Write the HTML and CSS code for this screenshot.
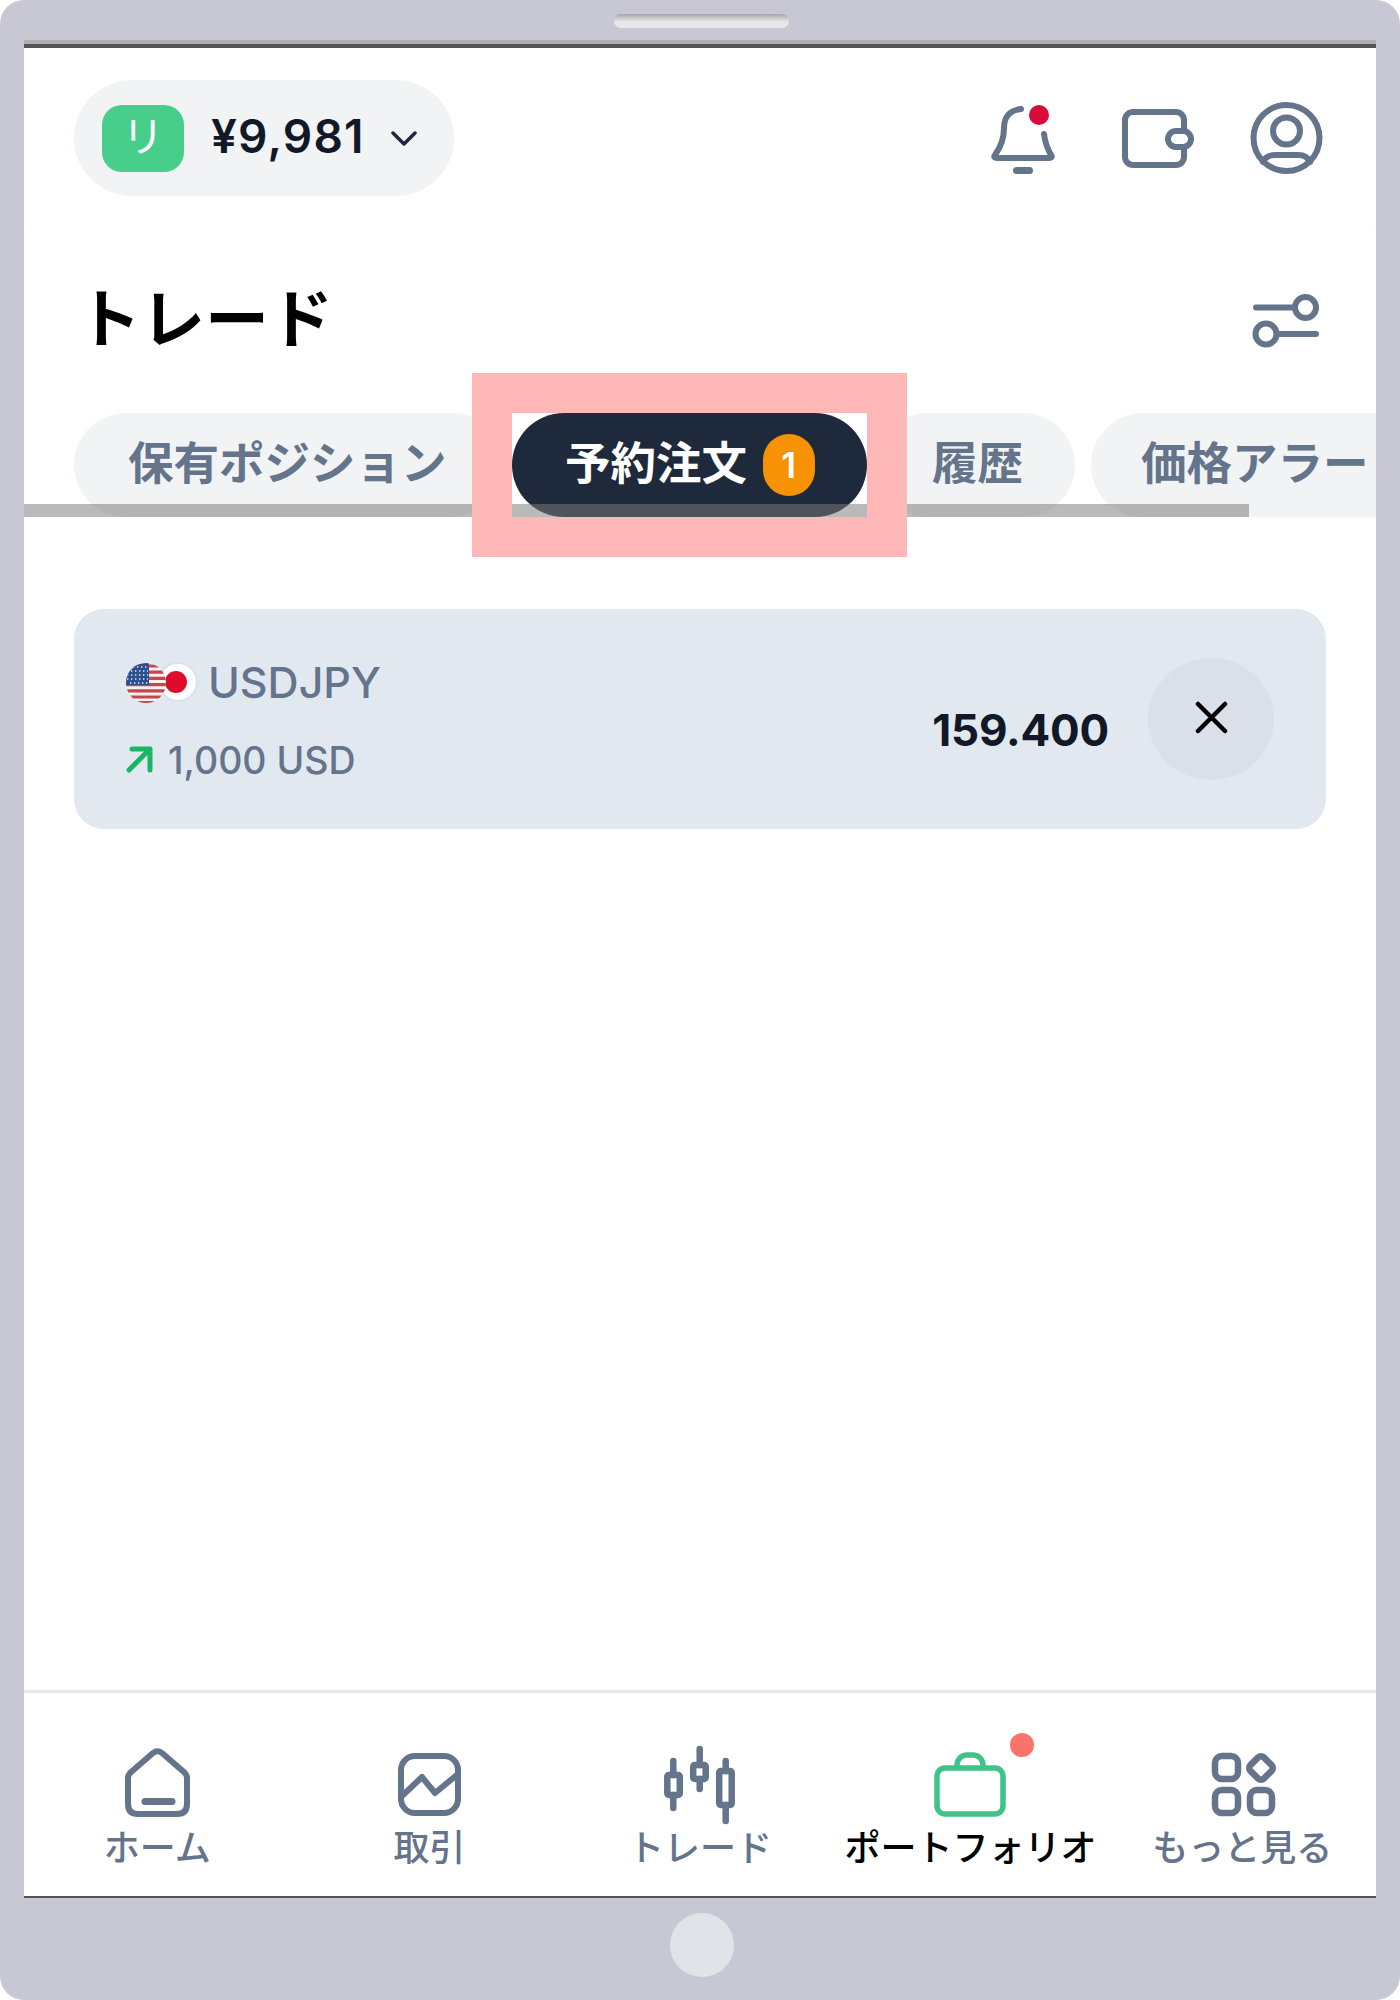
FILE: index.html
```html
<!DOCTYPE html>
<html lang="ja">
<head>
<meta charset="utf-8">
<title>トレード</title>
<link rel="stylesheet" href="styles.css">
</head>
<body>
<div class="device">
  <div class="bezel-top"><div class="speaker"></div></div>
  <main class="screen">
    <header class="topbar">
      <button class="account">
        <span class="account-badge">リ</span>
        <span class="balance">¥9,981</span>
        <svg class="chevron" viewBox="0 0 26 15"><path d="M2 2 L13 13 L24 2"/></svg>
      </button>
      <div class="top-icons">
        <span class="bell">
          <svg class="icon-bell" viewBox="0 0 64 69"><path d="M30 4 C19 5 13 12 13 23 C13 34 9 43 4 50 C2.5 52 3.5 53 6 53 H58 C60.5 53 61.500 52 60 50 C56 43 54 37 53 29"/><path class="thick" d="M25.500 65.500 H38.500"/></svg>
          <i class="bell-dot"></i>
        </span>
        <svg class="icon-wallet" viewBox="0 0 72 59"><path d="M62 19 V11 a8 8 0 0 0 -8 -8 H11 a8 8 0 0 0 -8 8 V48 a8 8 0 0 0 8 8 H54 a8 8 0 0 0 8 -8 V41"/><rect x="46" y="22" width="23" height="16" rx="8"/></svg>
        <svg class="icon-user" viewBox="0 0 73 72"><circle cx="36.500" cy="36" r="33"/><circle cx="36.500" cy="29" r="13.500"/><path d="M13 60 C15 55 20 53 25 53 H48 C53 53 58 55 60 60"/></svg>
      </div>
    </header>

    <div class="title-row">
      <h1 class="title">トレード</h1>
      <svg class="icon-filter" viewBox="0 0 66 53"><circle cx="52.500" cy="13.500" r="10.500"/><circle cx="13" cy="40" r="10.500"/><path d="M3 13.500 H40 M26 40 H63"/></svg>
    </div>

    <div class="tabs-wrap">
      <nav class="tabs">
        <span class="tab tab-first">保有ポジション</span>
        <span class="tab tab-active">予約注文<b class="count">1</b></span>
        <span class="tab tab-third">履歴</span>
        <span class="tab tab-last">価格アラート</span>
      </nav>
      <div class="scrollbar"></div>
      <div class="highlight"></div>
    </div>

    <section class="order">
      <div class="order-info">
        <div class="pair">
          <span class="flags">
            <svg class="flag-us" viewBox="0 0 40 40">
              <defs><clipPath id="round"><circle cx="20" cy="20" r="20"/></clipPath></defs>
              <g clip-path="url(#round)">
                <rect width="40" height="40" fill="#f5f1f1"/>
                <path class="stripes" d="M0 3 H40 M0 9.200 H40 M0 15.400 H40 M0 21.600 H40 M0 27.800 H40 M0 34 H40 M0 39.500 H40"/>
                <rect width="23" height="22" fill="#2c4f8f"/>
                <path class="stars" d="M3 4 H22 M1 8 H22 M1 12 H22 M1 16 H22 M4 20 H22"/>
              </g>
            </svg>
            <span class="flag-jp"><i></i></span>
          </span>
          <span class="symbol">USDJPY</span>
        </div>
        <div class="volume">
          <svg class="arrow" viewBox="0 0 27 27"><path d="M3 24 L24 3 M6 3 H24 V24"/></svg>
          <span>1,000 USD</span>
        </div>
      </div>
      <div class="price">159.400</div>
      <button class="close"><svg viewBox="0 0 33 33"><path d="M3 3 L30 30 M30 3 L3 30"/></svg></button>
    </section>

    <footer class="bottom-nav">
      <a class="nav-item nav-first">
        <span class="nav-icon">
          <svg class="i-home" viewBox="0 0 65 69"><path d="M3 30 Q3 27 5.500 24.500 L28 5 Q32.500 1.500 37 5 L59.500 24.500 Q62 27 62 30 V56 Q62 66 52 66 H13 Q3 66 3 56 Z"/><path class="thick" d="M20 53.500 H47"/></svg>
        </span>
        ホーム
      </a>
      <a class="nav-item">
        <span class="nav-icon">
          <svg class="i-chart" viewBox="0 0 63 63"><rect x="3" y="3" width="57" height="57" rx="14"/><path d="M5 42 L24 24 L37 40 L60 21"/></svg>
        </span>
        取引
      </a>
      <a class="nav-item">
        <span class="nav-icon">
          <svg class="i-candles" viewBox="0 0 73 78"><path d="M10.300 15 V29 M10.300 49 V62 M36.700 3 V19 M36.700 33 V43 M62.700 15 V25 M62.700 59 V75"/><rect x="4.300" y="29" width="12.500" height="20" rx="1.500"/><rect x="30.200" y="19" width="12.500" height="14" rx="1.500"/><rect x="56.200" y="25" width="12.500" height="34" rx="1.500"/></svg>
        </span>
        トレード
      </a>
      <a class="nav-item nav-current">
        <span class="nav-icon">
          <svg class="i-bag" viewBox="0 0 72 65"><rect x="3" y="16" width="66" height="46" rx="8"/><path d="M23 15 V13 a10 10 0 0 1 10 -10 h6 a10 10 0 0 1 10 10 V15"/></svg>
          <i class="nav-dot"></i>
        </span>
        ポートフォリオ
      </a>
      <a class="nav-item nav-last">
        <span class="nav-icon">
          <svg class="i-grid" viewBox="0 0 64 64"><rect x="3" y="4" width="23" height="23" rx="7"/><rect x="3" y="38" width="23" height="23" rx="7"/><rect x="38" y="38" width="22" height="23" rx="7"/><rect x="39.500" y="6.500" width="19" height="19" rx="4" transform="rotate(45 49 16)"/></svg>
        </span>
        もっと見る
      </a>
    </footer>
  </main>
  <div class="bezel-bottom"><div class="home-button"></div></div>
</div>
</body>
</html>
```
FILE: styles.css
```css
* { box-sizing: border-box; }
html, body { margin: 0; padding: 0; background: #fff; }
body { font-family: "Inter", "Noto Sans CJK JP", sans-serif; }

.device {
  width: 1400px;
  height: 2000px;
  background: #c8c8d4;
  border-radius: 24px;
  display: flex;
  flex-direction: column;
  overflow: hidden;
}
.bezel-top {
  height: 40px;
  flex: none;
  display: flex;
  justify-content: center;
  padding-top: 14px;
}
.speaker {
  width: 175px;
  height: 14px;
  margin-left: 2px;
  border-radius: 7px;
  background: linear-gradient(#a6a6a6, #e6e6e6 55%, #eaeaea);
}
.screen {
  flex: none;
  width: 1352px;
  height: 1858px;
  margin: 0 24px;
  background: #fff;
  border-top: 4px solid #b0b0b0;
  border-bottom: 2px solid #555;
  box-shadow: inset 0 4px 0 #555;
  display: flex;
  flex-direction: column;
  position: relative;
  overflow: hidden;
}
.bezel-bottom {
  flex: 1;
  display: flex;
  justify-content: center;
  padding-top: 15px;
}
.home-button {
  width: 64px;
  height: 64px;
  margin-left: 4px;
  border-radius: 50%;
  background: #e2e3e9;
}

/* top bar */
.topbar {
  flex: none;
  height: 186px;
  padding: 36px 53px 0 50px;
  display: flex;
  justify-content: space-between;
  align-items: flex-start;
  border-bottom: 1px solid #fcfcfc;
}
.account {
  width: 380px;
  height: 116px;
  border: 0;
  border-radius: 58px;
  background: #f2f3f5;
  padding: 0 0 0 28px;
  display: flex;
  align-items: center;
  font-family: inherit;
}
.account-badge {
  width: 82px;
  height: 67px;
  border-radius: 20px;
  background: #48ce8b;
  color: #fff;
  font: 400 42px/58px "Noto Sans CJK JP", sans-serif;
  text-align: center;
}
.balance {
  margin: -4px 0 0 27px;
  font-size: 46px;
  font-weight: 600;
  color: #111827;
  letter-spacing: 1.2px;
}
.chevron {
  width: 26px;
  height: 15px;
  margin-left: 26px;
  fill: none;
  stroke: #1e293b;
  stroke-width: 3.5;
  stroke-linecap: round;
  stroke-linejoin: round;
}
.top-icons {
  display: flex;
  align-items: center;
  margin-top: 22px;
}
.top-icons svg,
.title-row svg,
.nav-icon svg {
  fill: none;
  stroke: #64748b;
  stroke-width: 6;
  stroke-linecap: round;
  stroke-linejoin: round;
  display: block;
  overflow: visible;
}
.top-icons .thick, .nav-icon .thick { stroke-width: 7; }
.bell { position: relative; display: block; width: 64px; height: 69px; margin-top: 3px; }
.icon-bell { width: 64px; height: 69px; }
.bell-dot {
  position: absolute;
  left: 38px;
  top: 0;
  width: 20px;
  height: 20px;
  border-radius: 50%;
  background: #d90b3a;
}
.icon-wallet { width: 72px; height: 59px; margin-left: 67px; }
.icon-user { width: 73px; height: 72px; margin-left: 56px; }

/* title */
.title-row {
  flex: none;
  height: 183px;
  padding: 59px 57px 0 53px;
  display: flex;
  justify-content: space-between;
  align-items: flex-start;
}
.title {
  margin: -18px 0 0;
  font: 700 64px/87px "Noto Sans CJK JP", sans-serif;
  color: #000;
}
.icon-filter { width: 66px; height: 53px; margin-top: 5px; }

/* tabs */
.tabs-wrap {
  flex: none;
  height: 104px;
  position: relative;
}
.tabs {
  display: flex;
  height: 104px;
  padding-left: 50px;
  overflow: hidden;
  white-space: nowrap;
}
.tab {
  flex: none;
  height: 104px;
  padding: 0 54px 10px;
  border-radius: 52px;
  background: #f2f3f5;
  color: #64748b;
  font: 700 45.500px/94px "Noto Sans CJK JP", sans-serif;
  display: flex;
  align-items: center;
}
.tab-first { padding-right: 57.500px; }
.tab-active {
  margin-left: 8px;
  background: #1e293b;
  color: #fff;
  padding-left: 53px;
  padding-right: 52.500px;
}
.tab-third { margin-left: 8px; padding-left: 57px; padding-right: 52px; }
.tab-last { margin-left: 16px; padding-left: 50px; }
.count {
  width: 52px;
  height: 62px;
  margin: 10px 0 0 15.500px;
  border-radius: 26px;
  background: #f89205;
  color: #fff;
  font: 600 35px/62px "Inter", sans-serif;
  text-align: center;
}
.scrollbar {
  position: absolute;
  left: 0;
  top: 91px;
  width: 1225px;
  height: 13px;
  background: rgba(122, 122, 122, .52);
  border-top: 1px solid rgba(0, 0, 0, .02);
}
.highlight {
  position: absolute;
  left: 448px;
  top: -40px;
  width: 435px;
  height: 184px;
  border: solid #ffb8b8;
  border-width: 40px;
}

/* order card */
.order {
  flex: none;
  height: 220px;
  margin: 92px 50px 0;
  border-radius: 30px;
  background: #e2e8f0;
  display: flex;
  align-items: flex-start;
  padding: 49px 52px 0;
  position: relative;
}
.order-info { flex: 1; }
.pair { display: flex; align-items: center; height: 50px; margin-top: 0; }
.flags { width: 69px; height: 40px; position: relative; display: block; }
.flag-us { position: absolute; left: 0; top: 0; width: 40px; height: 40px; z-index: 1; }
.stripes { stroke: #c8454f; stroke-width: 3.200; fill: none; }
.stars { stroke: #dfe6f4; stroke-width: 1.400; stroke-dasharray: 1.400 2.600; fill: none; }
.flag-jp {
  position: absolute;
  left: 34px;
  top: 1px;
  width: 36px;
  height: 36px;
  border-radius: 50%;
  background: radial-gradient(circle at 45% 50%, #fff 70%, #e9e9ec 100%);
  box-shadow: 0 0 3px rgba(150, 150, 160, .35);
  display: flex;
  align-items: center;
  justify-content: center;
}
.flag-jp i { width: 22px; height: 22px; border-radius: 50%; background: #e00b2c; margin-left: -4px; }
.symbol {
  margin: -2px 0 0 13px;
  font-size: 43px;
  font-weight: 500;
  color: #64748b;
  line-height: 50px;
}
.volume { display: flex; align-items: center; margin-top: 29px; height: 46px; }
.arrow {
  width: 27px;
  height: 27px;
  margin-top: -1px;
  fill: none;
  stroke: #1ab567;
  stroke-width: 5;
  stroke-linecap: round;
  stroke-linejoin: round;
}
.volume span {
  margin-left: 15px;
  font-size: 37.500px;
  font-weight: 500;
  color: #64748b;
}
.price {
  margin-top: 45px;
  font-size: 44px;
  line-height: 54px;
  font-weight: 700;
  letter-spacing: -.2px;
  color: #111827;
}
.close {
  width: 126px;
  height: 122px;
  margin-left: 39px;
  border: 0;
  border-radius: 50%;
  background: #d9e0ea;
  padding: 0;
  display: flex;
  align-items: center;
  justify-content: center;
}
.close svg {
  width: 33px;
  height: 33px;
  margin-bottom: 4px;
  fill: none;
  stroke: #000;
  stroke-width: 4.500;
  stroke-linecap: round;
}

/* bottom nav */
.bottom-nav {
  margin-top: auto;
  flex: none;
  height: 206px;
  border-top: 3px solid #e2e8f0;
  display: grid;
  grid-template-columns: repeat(5, 1fr);
}
.nav-item {
  position: relative;
  height: 203px;
  padding-top: 53px;
  display: flex;
  flex-direction: column;
  align-items: center;
  color: #64748b;
  font: 500 36px/50px "Noto Sans CJK JP", sans-serif;
  text-align: center;
  white-space: nowrap;
}
.nav-first { padding-right: 4px; }
.nav-last { padding-left: 3px; }
.nav-current { color: #000; }
.nav-icon {
  position: relative;
  height: 71px;
  margin-bottom: 3px;
  display: flex;
  align-items: flex-end;
  justify-content: center;
}
.i-chart { width: 63px; height: 63px; margin-bottom: 1px; }
.i-home { width: 65px; height: 69px; }
.i-candles { width: 73px; height: 78px; margin-top: -7px; margin-bottom: -7px; }
.nav-icon .i-candles { stroke-width: 6.500; stroke-linecap: round; }
.nav-icon .i-bag { width: 72px; height: 65px; stroke: #3ec488; stroke-width: 5.500; }
.nav-icon .i-grid { width: 64px; height: 64px; margin: 0 0 1px 3px; stroke-width: 6.500; }
.nav-dot {
  position: absolute;
  left: 76px;
  top: -13px;
  width: 24px;
  height: 24px;
  border-radius: 50%;
  background: #fb7369;
}
```
